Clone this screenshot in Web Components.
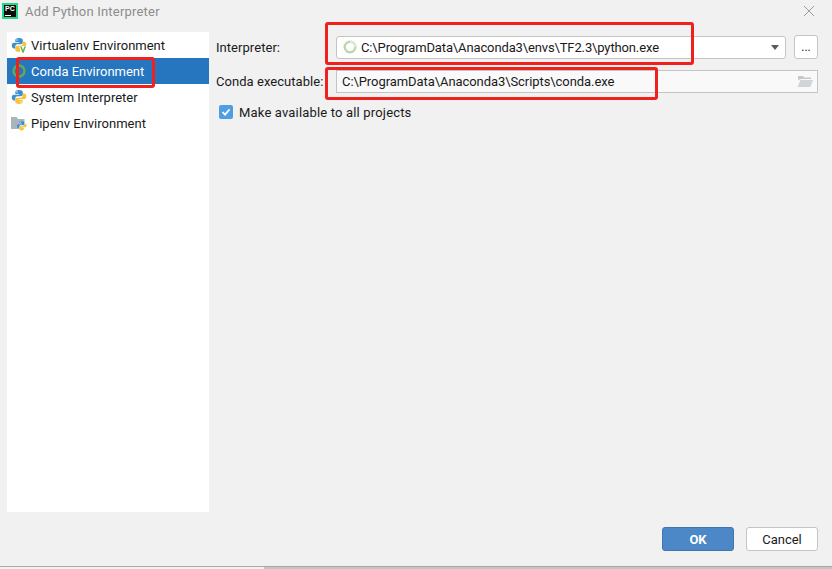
<!DOCTYPE html>
<html>
<head>
<meta charset="utf-8">
<title>Add Python Interpreter</title>
<style>
  html, body { margin: 0; height: 100%; background: #f1f1f1; overflow: hidden; }
  body { font: 13px Roboto, "Noto Sans", sans-serif; color: #1a1a1a; }
</style>
</head>
<body>
<interpreter-dialog>
  <env-item slot="sidebar" icon="virtualenv">Virtualenv Environment</env-item>
  <env-item slot="sidebar" icon="conda" selected>Conda Environment</env-item>
  <env-item slot="sidebar" icon="python">System Interpreter</env-item>
  <env-item slot="sidebar" icon="pipenv">Pipenv Environment</env-item>

  <form-row label="Interpreter:" style="--row-top: 3px">
    <path-field kind="combo" value="C:\ProgramData\Anaconda3\envs\TF2.3\python.exe"></path-field>
    <dialog-button kind="more">...</dialog-button>
  </form-row>
  <form-row label="Conda executable:" style="--row-top: 10px">
    <path-field kind="browse" value="C:\ProgramData\Anaconda3\Scripts\conda.exe"></path-field>
  </form-row>
  <check-row>Make available to all projects</check-row>

  <dialog-button slot="footer" kind="primary">OK</dialog-button>
  <dialog-button slot="footer">Cancel</dialog-button>
</interpreter-dialog>

<script>
(function() {

  const PY_BLUE = '<path fill="#3c8fd0" d="M7.900 1C5 1 4.300 2.100 4.300 3.400V5h3.900v.7H2.900C1.500 5.700.8 6.800.8 8.500s.8 2.900 2.100 2.900h1.400V9.500c0-1.300 1-2.200 2.300-2.200h3.300c1.100 0 1.900-.9 1.900-2V3.200C11.800 1.900 10.500 1 7.900 1z"/><circle cx="6" cy="3" r=".7" fill="#fff"/>';
  const PY_YELLOW = '<path fill="#f5c33b" d="M8.100 15c2.900 0 3.600-1.100 3.600-2.400V11H7.800v-.7h5.300c1.400 0 2.100-1.100 2.100-2.800s-.8-2.900-2.100-2.900h-1.400v1.900c0 1.300-1 2.200-2.300 2.200H6.100c-1.100 0-1.900.9-1.900 2v2.100C4.200 14.100 5.500 15 8.100 15z"/><circle cx="10" cy="13" r=".7" fill="#fff"/>';

  const ICONS = {
    python: `<svg width="16" height="16" viewBox="0 0 16 16">${PY_BLUE}${PY_YELLOW}</svg>`,
    virtualenv: `<svg width="16" height="16" viewBox="0 0 16 16">${PY_BLUE}${PY_YELLOW}<rect x="9" y="9" width="7" height="7" fill="#fff"/><path d="M9.800 9.500l2.200 5.500 2.200-5.500" fill="none" stroke="#62b543" stroke-width="1.500"/></svg>`,
    conda: `<svg width="16" height="16" viewBox="0 0 16 16"><circle cx="8" cy="8" r="5.500" fill="none" stroke="#6aa84f" stroke-width="2.400"/></svg>`,
    pipenv: `<svg width="16" height="16" viewBox="0 0 16 16"><path fill="#aab4bb" d="M0 2h5.500l1.500 2h6.500v4H8v6H0z"/><g transform="translate(5.500 5.500) scale(.66)">${PY_BLUE}${PY_YELLOW}</g></svg>`,
    spinner: `<svg width="14" height="14" viewBox="0 0 14 14"><circle cx="7" cy="7" r="5.300" fill="none" stroke="#b9d8ae" stroke-width="2.400"/><path d="M7 1.700A5.300 5.300 0 0 1 12.300 7" fill="none" stroke="#dcebd6" stroke-width="2.400"/></svg>`,
    folder: `<svg width="16" height="14" viewBox="0 0 16 14"><path fill="#c4c8ca" d="M1 2h5l1 1.500h7V5H4L1 6z"/><path fill="#d2d5d7" d="M3.500 6H16l-2.500 7H.5z"/></svg>`
  };

  /** A custom element whose shadow root is set from a string. */
  class ShadowElement extends HTMLElement {
    render(html) {
      if (!this.shadowRoot) {
        this.attachShadow({mode: 'open'});
      }
      this.shadowRoot.innerHTML = html;
    }
  }

  class InterpreterDialog extends ShadowElement {
    connectedCallback() {
      this.render(`<style>
        :host { display: flex; flex-direction: column; position: relative; width: 832px; height: 569px; box-sizing: border-box; background: #f1f1f1; }
        header { display: flex; align-items: center; height: 22px; padding: 0 0 0 2px; }
        .logo { width: 12px; height: 12px; background: #0c0c0c; border: 2px solid #21d789; margin-right: 7px; color: #fff; font: bold 7px/8px "Liberation Sans", sans-serif; position: relative; overflow: hidden; }
        .logo span { position: absolute; left: 1px; top: 0; }
        .logo i { position: absolute; left: 1px; bottom: 1px; width: 6px; height: 1px; background: #fff; }
        h1 { margin: 0; font: 400 13px Roboto, sans-serif; color: #8c8c8c; letter-spacing: .2px; flex: 1; }
        .close { width: 12px; height: 12px; margin-right: 17px; }
        .body { display: flex; margin-top: 10px; height: 480px; }
        .side { width: 202px; margin-left: 7px; background: #fff; box-sizing: border-box; }
        .main { flex: 1; padding: 0 14px 0 7px; min-width: 0; }
        footer { display: flex; justify-content: flex-end; gap: 12px; padding: 15px 14px 0 0; }
        .edge { position: absolute; left: 0; right: 0; bottom: 0; height: 3px; background: linear-gradient(to right, #f1f1f1 264px, #c4c4c4 264px); border-top: 1px solid #a8a8a8; box-sizing: border-box; }
        .mark { position: absolute; border: 3px solid #f0201c; border-radius: 3px; box-sizing: border-box; pointer-events: none; }
      </style>
      <header>
        <div class="logo"><span>PC</span><i></i></div>
        <h1>Add Python Interpreter</h1>
        <svg class="close" viewBox="0 0 12 12"><path d="M1 1l10 10M11 1L1 11" stroke="#9a9a9a" fill="none"/></svg>
      </header>
      <div class="body">
        <div class="side"><slot name="sidebar"></slot></div>
        <div class="main"><slot></slot></div>
      </div>
      <footer><slot name="footer"></slot></footer>
      <div class="edge"></div>
      <div class="mark" style="left:16px;top:57px;width:139px;height:31px"></div>
      <div class="mark" style="left:325px;top:22px;width:369px;height:43px"></div>
      <div class="mark" style="left:325px;top:67px;width:333px;height:33px"></div>`);
    }
  }

  class EnvItem extends ShadowElement {
    connectedCallback() {
      const selected = this.hasAttribute('selected');
      this.render(`<style>
        :host { display: flex; align-items: center; height: 26px; padding-left: 4px; gap: 4px; background: ${selected ? '#2675bf' : 'transparent'}; color: ${selected ? '#fff' : '#1a1a1a'}; }
        svg { display: block; flex: none; }
      </style>${ICONS[this.getAttribute('icon')]}<slot></slot>`);
    }
  }

  class FormRow extends ShadowElement {
    connectedCallback() {
      this.render(`<style>
        :host { display: flex; align-items: center; gap: 8px; height: 24px; margin-top: var(--row-top, 0); }
        label { width: 112px; flex: none; white-space: nowrap; letter-spacing: .05px; }
      </style><label>${this.getAttribute('label')}</label><slot></slot>`);
    }
  }

  class PathField extends ShadowElement {
    connectedCallback() {
      const combo = this.getAttribute('kind') === 'combo';
      this.render(`<style>
        :host { display: flex; align-items: center; flex: 1; align-self: flex-end; height: 23px; box-sizing: border-box; min-width: 0; background: ${combo ? '#fff' : '#f9f9f9'}; border: 1px solid #c4c4c4; border-radius: ${combo ? 3 : 0}px; padding: 0 ${combo ? 6 : 4}px 1px ${combo ? 6 : 5}px; gap: 4px; letter-spacing: ${combo ? -0.13 : -0.07}px; }
        span { flex: 1; white-space: nowrap; }
        i { width: 0; height: 0; border: 4.500px solid transparent; border-top: 5px solid #5a5a5a; border-bottom: 0; }
        svg { display: block; }
      </style>${combo ? ICONS.spinner : ''}<span>${this.getAttribute('value')}</span>${combo ? '<i></i>' : ICONS.folder}`);
    }
  }

  class CheckRow extends ShadowElement {
    connectedCallback() {
      this.render(`<style>
        :host { display: flex; align-items: center; gap: 6px; height: 18px; margin: 10px 0 0 3px; letter-spacing: .17px; }
        .box { width: 14px; height: 14px; background: #4f9ee3; border-radius: 2px; display: block; }
      </style><svg class="box" viewBox="0 0 14 14"><path d="M3.500 7l2.500 2.700 4.500-5.400" fill="none" stroke="#fff" stroke-width="1.800"/></svg><slot></slot>`);
    }
  }

  class DialogButton extends ShadowElement {
    connectedCallback() {
      const kind = this.getAttribute('kind');
      const primary = kind === 'primary';
      const more = kind === 'more';
      this.render(`<style>
        :host { display: flex; align-items: center; justify-content: center; box-sizing: border-box; flex: none; width: ${more ? 24 : 72}px; height: 24px; border-radius: 3px; background: ${primary ? '#4c87c8' : '#fff'}; border: 1px solid ${primary ? '#3f75b0' : '#c4c4c4'}; color: ${primary ? '#fff' : '#1a1a1a'}; font-weight: ${primary ? 700 : 400}; ${more ? 'font-size: 12px;' : ''} }
      </style><slot></slot>`);
    }
  }

  customElements.define('interpreter-dialog', InterpreterDialog);
  customElements.define('env-item', EnvItem);
  customElements.define('form-row', FormRow);
  customElements.define('path-field', PathField);
  customElements.define('check-row', CheckRow);
  customElements.define('dialog-button', DialogButton);
})();
</script>
</body>
</html>
